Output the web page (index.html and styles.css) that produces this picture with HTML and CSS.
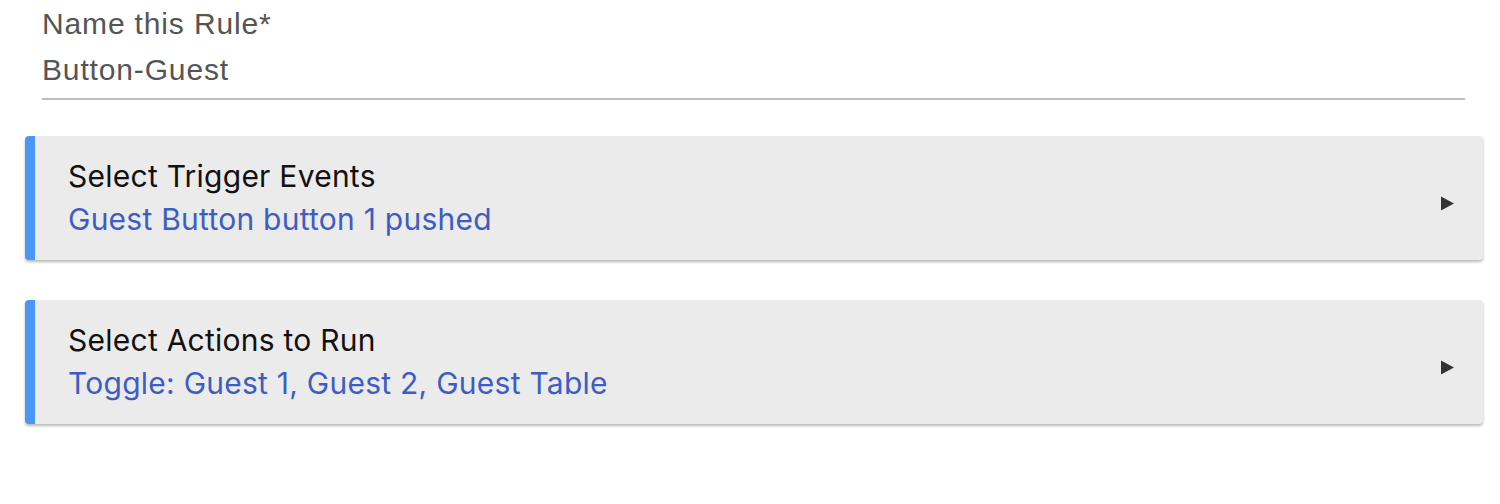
FILE: index.html
```html
<!DOCTYPE html>
<html>
<head>
<meta charset="utf-8">
<link rel="stylesheet" href="styles.css">
</head>
<body>
<div class="page">
  <div class="field">
    <div class="field-label">Name this Rule*</div>
    <div class="field-value">Button-Guest</div>
  </div>
  <div class="card">
    <div class="card-text">
      <div class="card-title">Select Trigger Events</div>
      <div class="card-sub">Guest Button button 1 pushed</div>
    </div>
    <svg class="card-arrow" width="15" height="15" viewBox="0 0 15 15"><polygon points="1,0.5 14,7.5 1,14.5" fill="#333"/></svg>
  </div>
  <div class="card">
    <div class="card-text">
      <div class="card-title">Select Actions to Run</div>
      <div class="card-sub">Toggle: Guest 1, Guest 2, Guest Table</div>
    </div>
    <svg class="card-arrow" width="15" height="15" viewBox="0 0 15 15"><polygon points="1,0.5 14,7.5 1,14.5" fill="#333"/></svg>
  </div>
</div>
</body>
</html>
```
FILE: styles.css
```css
html, body {
  margin: 0;
  padding: 0;
  background: #ffffff;
}
.page {
  padding: 6px 17px 0 25px;
  display: flex;
  flex-direction: column;
}
.field {
  margin: 0 18px 36px 17px;
  padding-bottom: 10px;
  border-bottom: 2px solid #bdbdbd;
  font-family: "Liberation Sans", Arial, sans-serif;
  font-size: 30px;
  line-height: 36px;
  color: #555555;
  letter-spacing: 0.85px;
}
.field-value {
  margin-top: 10px;
}
.card {
  display: flex;
  align-items: center;
  height: 124px;
  box-sizing: border-box;
  background: #ebebeb;
  border-left: 10px solid #4a97f6;
  border-radius: 4px;
  box-shadow: 0 2px 3px rgba(0, 0, 0, 0.28);
  margin-bottom: 40px;
  padding: 0 28px 0 33px;
  font-family: Inter, "Noto Sans", sans-serif;
  font-size: 30px;
  line-height: 43px;
  letter-spacing: 0.25px;
}
.card-text {
  flex: 1;
}
.card-title {
  color: #111111;
}
.card-sub {
  color: #3d5dc4;
}
.card-arrow {
  margin-top: 10px;
}
```
